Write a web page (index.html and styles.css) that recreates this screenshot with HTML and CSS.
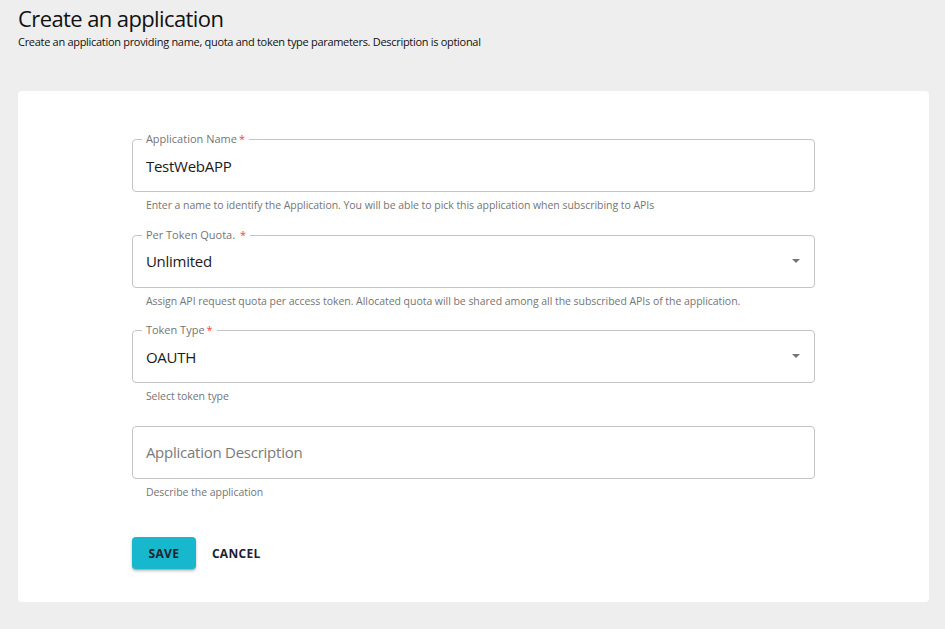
FILE: index.html
```html
<!DOCTYPE html>
<html lang="en">
<head>
<meta charset="utf-8">
<title>Create an application</title>
<link rel="stylesheet" href="styles.css">
</head>
<body>
<header class="page-head">
  <h1 class="title">Create an application</h1>
  <p class="subtitle">Create an application providing name, quota and token type parameters. Description is optional</p>
</header>
<main class="card">
  <form class="form">
    <div class="field">
      <div class="outline">
        <span class="label">Application Name<span class="req">*</span></span>
        <span class="value">TestWebAPP</span>
      </div>
      <p class="helper">Enter a name to identify the Application. You will be able to pick this application when subscribing to APIs</p>
    </div>
    <div class="field">
      <div class="outline">
        <span class="label">Per Token Quota. <span class="req">*</span></span>
        <span class="value">Unlimited</span>
        <svg class="arrow" width="8" height="4" viewBox="0 0 8 4"><path d="M0 0h8L4 4z" fill="#757575"/></svg>
      </div>
      <p class="helper">Assign API request quota per access token. Allocated quota will be shared among all the subscribed APIs of the application.</p>
    </div>
    <div class="field">
      <div class="outline">
        <span class="label">Token Type<span class="req">*</span></span>
        <span class="value">OAUTH</span>
        <svg class="arrow" width="8" height="4" viewBox="0 0 8 4"><path d="M0 0h8L4 4z" fill="#757575"/></svg>
      </div>
      <p class="helper">Select token type</p>
    </div>
    <div class="field">
      <div class="outline">
        <span class="value placeholder">Application Description</span>
      </div>
      <p class="helper">Describe the application</p>
    </div>
    <div class="actions">
      <button type="button" class="btn btn-save">Save</button>
      <button type="button" class="btn btn-cancel">Cancel</button>
    </div>
  </form>
</main>
</body>
</html>
```
FILE: styles.css
```css
* { box-sizing: border-box; }
body {
  margin: 0;
  background: #eeeeee;
  font-family: "Open Sans", "Noto Sans", sans-serif;
  color: #1a1a1a;
}
.page-head {
  padding: 3px 18px 0;
  height: 91px;
}
.title {
  margin: 0;
  font-size: 22px;
  font-weight: 400;
  line-height: 30px;
  letter-spacing: -0.6px;
  color: #111;
}
.subtitle {
  margin: 0;
  font-size: 11px;
  line-height: 17px;
  letter-spacing: -0.3px;
  color: #111;
}
.card {
  margin: 0 16px 0 18px;
  background: #fff;
  border-radius: 4px;
  padding: 48px 0 33px;
}
.form {
  width: 75%;
  margin: 0 auto;
  display: flex;
  flex-direction: column;
  gap: 22.5px;
}
.outline {
  position: relative;
  height: 53px;
  border: 1px solid #c4c4c4;
  border-radius: 4px;
  display: flex;
  align-items: center;
  padding: 0 13px;
}
.label {
  position: absolute;
  top: -8px;
  left: 9px;
  padding: 0 4px;
  background: #fff;
  font-size: 11px;
  line-height: 14px;
  color: #757575;
}
.req { color: #f44336; margin-left: 2px; }
.value {
  font-size: 15px;
  letter-spacing: -0.25px;
  color: #1a1a1a;
}
.placeholder { color: #7a7a7a; }
.arrow {
  position: absolute;
  right: 14px;
  top: 23px;
}
.helper {
  margin: 6px 0 0 14px;
  font-size: 10.5px;
  line-height: 14px;
  letter-spacing: -0.04px;
  color: #757575;
}
.actions {
  display: flex;
  gap: 16px;
  margin-top: 16px;
}
.btn {
  font-family: inherit;
  font-size: 12px;
  font-weight: 700;
  text-transform: uppercase;
  letter-spacing: 0.3px;
  border: none;
  border-radius: 4px;
  height: 32px;
  cursor: pointer;
  color: #1d2130;
}
.btn-save {
  width: 64px;
  background: #17b8ce;
  box-shadow: 0 2px 3px rgba(0,0,0,0.25), 0 1px 1px rgba(0,0,0,0.14);
}
.btn-cancel {
  background: transparent;
  padding: 0;
}
```
